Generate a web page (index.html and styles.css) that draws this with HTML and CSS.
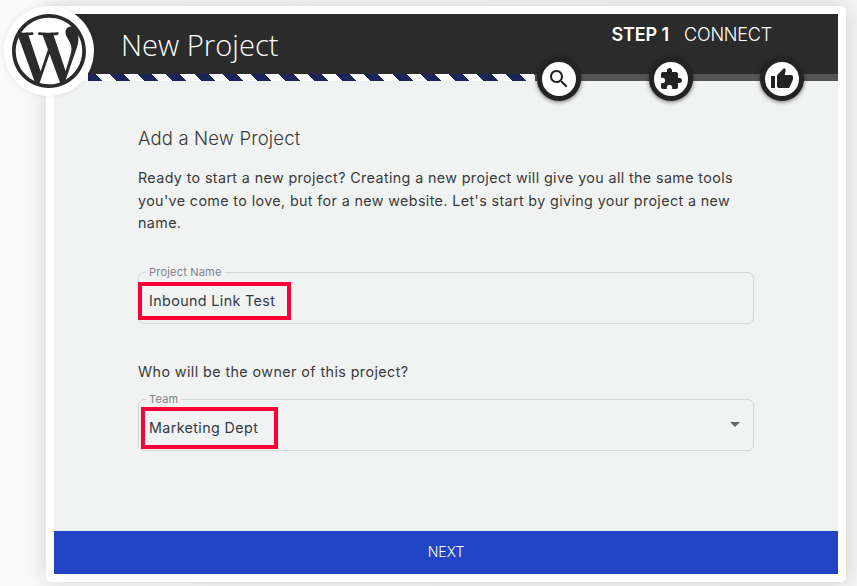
FILE: index.html
```html
<!DOCTYPE html>
<html lang="en">
<head>
<meta charset="utf-8">
<title>New Project</title>
<link rel="stylesheet" href="styles.css">
</head>
<body>
<div class="card">
  <div class="logo">
    <svg class="logo-mark" viewBox="0 0 24 24"><path d="M21.469 6.825c.84 1.537 1.318 3.3 1.318 5.175 0 3.979-2.156 7.456-5.363 9.325l3.295-9.527c.615-1.54.82-2.771.82-3.864 0-.405-.026-.78-.07-1.11m-7.981.105c.647-.03 1.232-.105 1.232-.105.582-.075.514-.93-.067-.899 0 0-1.755.135-2.88.135-1.064 0-2.85-.15-2.85-.15-.585-.03-.661.855-.075.885 0 0 .54.061 1.125.09l1.68 4.605-2.37 7.08L5.354 6.9c.649-.03 1.234-.1 1.234-.1.585-.075.516-.93-.065-.896 0 0-1.746.138-2.874.138-.2 0-.438-.008-.69-.015C4.911 3.15 8.235 1.215 12 1.215c2.809 0 5.365 1.072 7.286 2.833-.046-.003-.091-.009-.141-.009-1.06 0-1.812.923-1.812 1.914 0 .89.513 1.643 1.06 2.531.411.72.89 1.643.89 2.977 0 .915-.354 1.994-.821 3.479l-1.075 3.585-3.9-11.61.001.014zM12 22.784c-1.059 0-2.081-.153-3.048-.437l3.237-9.406 3.315 9.087c.024.053.05.101.078.149-1.12.393-2.325.609-3.582.609M1.211 12c0-1.564.336-3.05.935-4.39L7.29 21.709C3.694 19.96 1.212 16.271 1.211 12M12 0C5.385 0 0 5.385 0 12s5.385 12 12 12 12-5.385 12-12S18.615 0 12 0"/></svg>
  </div>
  <header class="header">
    <h1 class="title">New Project</h1>
    <div class="step"><strong class="step-num">STEP 1</strong><span class="step-name">CONNECT</span></div>
  </header>
  <div class="progress">
    <div class="stripes"></div>
    <div class="track"></div>
    <span class="dot dot-search"><svg class="dot-icon" viewBox="0 0 24 24"><path d="M15.5 14h-.79l-.28-.27C15.41 12.59 16 11.11 16 9.5 16 5.91 13.09 3 9.5 3S3 5.91 3 9.5 5.91 16 9.5 16c1.61 0 3.09-.59 4.23-1.57l.27.28v.79l5 4.99L20.49 19l-4.99-5zm-6 0C7.01 14 5 11.99 5 9.5S7.01 5 9.5 5 14 7.01 14 9.5 11.99 14 9.5 14z"/></svg></span>
    <span class="dot dot-puzzle"><svg class="dot-icon" viewBox="0 0 24 24"><path d="M20.5 11H19V7c0-1.1-.9-2-2-2h-4V3.5C13 2.12 11.88 1 10.5 1S8 2.12 8 3.5V5H4c-1.1 0-1.99.9-1.99 2v3.8H3.5c1.49 0 2.7 1.21 2.7 2.7s-1.21 2.7-2.7 2.7H2V20c0 1.1.9 2 2 2h3.8v-1.5c0-1.49 1.21-2.7 2.7-2.7 1.49 0 2.7 1.21 2.7 2.7V22H17c1.1 0 2-.9 2-2v-4h1.5c1.38 0 2.5-1.12 2.5-2.5S21.88 11 20.5 11z"/></svg></span>
    <span class="dot dot-thumb"><svg class="dot-icon" viewBox="0 0 24 24"><path d="M1 21h4V9H1v12zm22-11c0-1.1-.9-2-2-2h-6.31l.95-4.57.03-.32c0-.41-.17-.79-.44-1.06L14.17 1 7.59 7.59C7.22 7.95 7 8.45 7 9v10c0 1.1.9 2 2 2h9c.83 0 1.54-.5 1.84-1.22l3.02-7.05c.09-.23.14-.47.14-.73v-2z"/></svg></span>
  </div>
  <main class="content">
    <h2 class="heading">Add a New Project</h2>
    <p class="intro">Ready to start a new project? Creating a new project will give you all the same tools you've come to love, but for a new website. Let's start by giving your project a new name.</p>
    <fieldset class="field field-name">
      <legend class="legend">Project Name</legend>
      <div class="value">Inbound Link Test</div>
      <span class="mark mark-name"></span>
    </fieldset>
    <p class="question">Who will be the owner of this project?</p>
    <fieldset class="field field-team">
      <legend class="legend legend-team">Team</legend>
      <div class="value">Marketing Dept</div>
      <span class="caret"></span>
      <span class="mark mark-team"></span>
    </fieldset>
  </main>
  <button class="next" type="button">NEXT</button>
</div>
</body>
</html>
```

FILE: styles.css
```css
* { box-sizing: border-box; }

html, body {
  margin: 0;
  height: 586px;
  overflow: hidden;
}

body {
  background: linear-gradient(90deg, #f9faf9 0, #f4f5f4 100%);
  font-family: "Inter", "Liberation Sans", sans-serif;
  color: #3a3a3a;
  padding: 6px 11px 4px 46px;
}

.card {
  position: relative;
  width: 800px;
  height: 576px;
  padding: 8px;
  background: #fff;
  border-radius: 5px;
  box-shadow: 0 0 22px rgba(0, 0, 0, .16);
  display: flex;
  flex-direction: column;
}

.logo {
  position: absolute;
  left: -42px;
  top: 0;
  width: 90px;
  height: 90px;
  background: #fff;
  border-radius: 50%;
  box-shadow: 0 0 6px rgba(0, 0, 0, .08);
  display: flex;
  align-items: center;
  justify-content: center;
  z-index: 2;
}

.logo-mark {
  width: 74px;
  height: 74px;
  fill: #2b2b2b;
}

.header {
  flex: none;
  height: 60px;
  background: #2b2b2b;
  color: #fff;
  display: flex;
  justify-content: space-between;
  padding: 0 66px 0 67px;
}

.title {
  margin: 12px 0 0;
  font-family: "Open Sans", sans-serif;
  font-weight: 300;
  font-size: 29.2px;
  line-height: 38px;
}

.step {
  margin-top: 10px;
  font-size: 18px;
  line-height: 22px;
  display: flex;
  gap: 15px;
}

.step-num {
  font-weight: 600;
  letter-spacing: -.1px;
}

.step-name {
  font-weight: 300;
  letter-spacing: -.2px;
}

.progress {
  position: relative;
  flex: none;
  height: 7px;
  display: flex;
  background: #fff;
}

.stripes {
  margin-left: 34px;
  width: 447px;
  background: repeating-linear-gradient(45deg, #1b2559 0 10px, #fff 10px 20px);
}

.track {
  flex: 1;
  background: #555;
}

.dot {
  position: absolute;
  top: -17px;
  width: 44px;
  height: 44px;
  border: 5.5px solid #232323;
  border-radius: 50%;
  background: #fff;
  box-shadow: 0 1px 4px rgba(0, 0, 0, .55);
  display: flex;
  align-items: center;
  justify-content: center;
}

.dot-search { left: 483px; }
.dot-puzzle { left: 595px; }
.dot-thumb { left: 706px; }

.dot-icon {
  width: 24px;
  height: 24px;
  fill: #222;
}

.content {
  flex: 1;
  background: #f1f3f2;
  padding: 45px 84px 0;
}

.heading {
  margin: 0;
  font-weight: 350;
  font-size: 18.5px;
  line-height: 24px;
  letter-spacing: .15px;
}

.intro {
  margin: 17px 0 0;
  font-size: 14.3px;
  line-height: 22.6px;
  letter-spacing: .38px;
}

.field {
  position: relative;
  margin: 0;
  padding: 0 10px;
  height: 58px;
  min-width: 0;
  border: 1px solid #d6d8d7;
  border-radius: 6px;
}

.field-name { margin-top: 31px; }
.field-team { margin-top: 11px; }

.legend {
  padding: 0 3px;
  margin-left: -3px;
  font-size: 11px;
  line-height: 13px;
  letter-spacing: .2px;
  color: #80808c;
}

.value {
  margin-top: 12px;
  font-size: 14.3px;
  line-height: 20px;
  letter-spacing: .38px;
  color: #333a45;
}

.question {
  margin: 38px 0 0;
  font-size: 14.3px;
  line-height: 20px;
  letter-spacing: .42px;
}

.caret {
  position: absolute;
  right: 13px;
  top: 16px;
  border-left: 5px solid transparent;
  border-right: 5px solid transparent;
  border-top: 5px solid #666;
}

.mark {
  position: absolute;
  border: 4px solid #fb0036;
}

.mark-name {
  left: -1px;
  top: 3px;
  width: 153px;
  height: 38px;
}

.mark-team {
  left: 2px;
  top: 1px;
  width: 137px;
  height: 42px;
}

.next {
  flex: none;
  height: 43px;
  border: 0;
  padding: 0 0 2px;
  background: #2144c4;
  color: #fff;
  font-family: inherit;
  font-size: 14px;
  font-weight: 300;
}
```
